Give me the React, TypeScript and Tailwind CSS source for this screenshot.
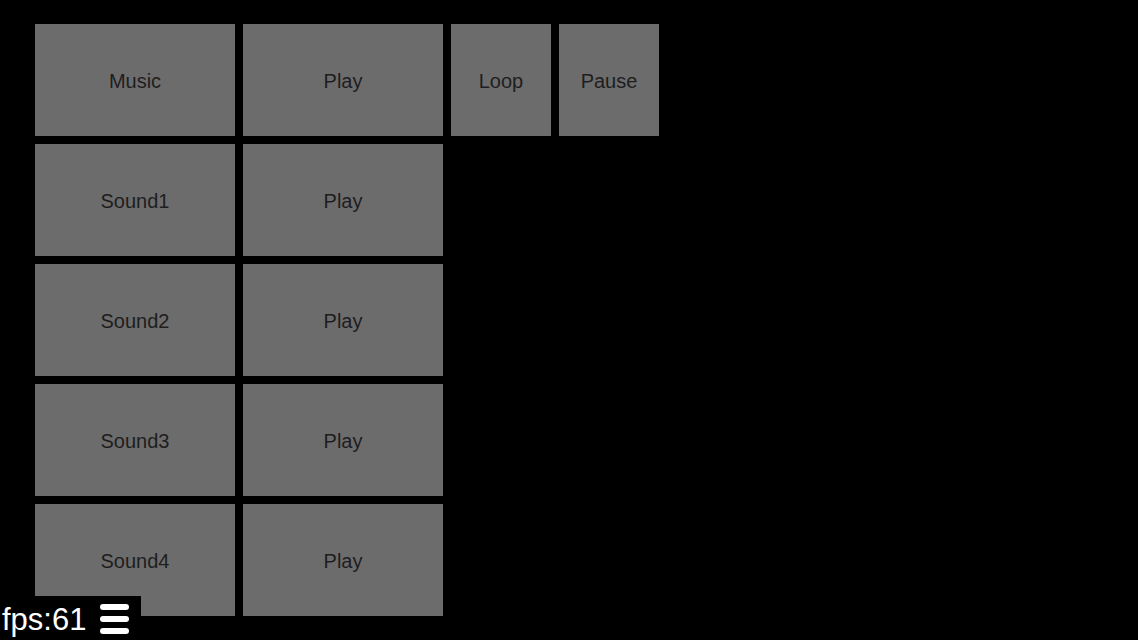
import React from "react";

const rows = [
  ["Music", "Play"],
  ["Sound1", "Play"],
  ["Sound2", "Play"],
  ["Sound3", "Play"],
  ["Sound4", "Play"],
];

const Btn = ({ label, wide = true }: { label: string; wide?: boolean }) => (
  <div
    className={`${wide ? "w-[200px]" : "w-[100px]"} h-[112px] bg-[#6c6c6c] flex items-center justify-center text-[20px] text-[#1e1e1e] pt-[2px]`}
  >
    {label}
  </div>
);

const App = () => {
  return (
    <div
      className="relative w-[1138px] h-[640px] bg-black overflow-hidden"
      style={{ fontFamily: '"Liberation Sans", Arial, sans-serif' }}
    >
      <div className="flex flex-col gap-2 pl-[35px] pt-[24px]">
        {rows.map((row, i) => (
          <div key={i} className="flex gap-2">
            <Btn label={row[0]} />
            <Btn label={row[1]} />
            {i === 0 && (
              <>
                <Btn label="Loop" wide={false} />
                <Btn label="Pause" wide={false} />
              </>
            )}
          </div>
        ))}
      </div>

      {/* fps overlay */}
      <div className="absolute left-0 bottom-0 w-[141px] h-[44px] bg-black flex items-center">
        <span className="text-white text-[31px] leading-none ml-[2px] mt-[2px]">fps:61</span>
        <div className="ml-[14px] flex flex-col gap-[6px] mt-[2px]">
          <div className="w-[29px] h-[6px] rounded-full bg-white" />
          <div className="w-[29px] h-[6px] rounded-full bg-white" />
          <div className="w-[29px] h-[6px] rounded-full bg-white" />
        </div>
      </div>
    </div>
  );
};

export default App;
